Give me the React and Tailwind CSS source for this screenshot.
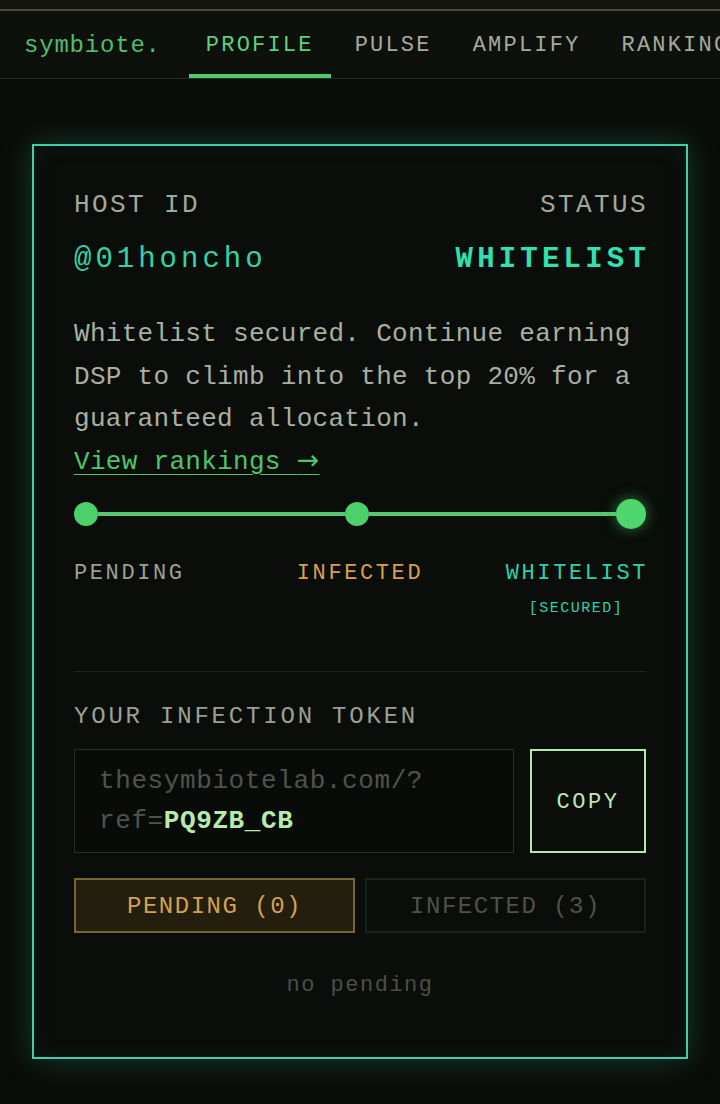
import React from 'react';

const tabs = ['PROFILE', 'PULSE', 'AMPLIFY', 'RANKINGS'];

export default function App() {
  return (
    <div className="min-h-screen bg-[#0a0c09] font-['Liberation_Mono','DejaVu_Sans_Mono',monospace]">
      {/* barra superior */}
      <div className="h-[9px] bg-[#15140f]" />
      <div className="h-[2px] bg-[#4b4a3f]" />

      <nav className="flex h-[68px] items-stretch overflow-hidden whitespace-nowrap border-b border-[#1f2a21] bg-[#0e100c] pl-6">
        <div className="flex items-center border-b-4 border-transparent pr-[28px] pt-[6px] text-[24px] tracking-[0.8px] text-[#4fbf6a]">
          symbiote.
        </div>
        <div className="flex gap-[7px]">
          {tabs.map((t, i) => (
            <div
              key={t}
              className={`flex items-center border-b-4 px-[17px] pt-[6px] text-[22px] tracking-[2.2px] ${
                i === 0 ? 'border-[#52c872] text-[#5fcf7c]' : 'border-transparent text-[#a4ab9d]'
              }`}
            >
              {t}
            </div>
          ))}
        </div>
      </nav>

      <main className="px-8 pb-[45px] pt-[65px]">
        <div className="border-2 border-[#3fcfa8] bg-[#0a0d0a] p-10 shadow-[0_0_30px_rgba(63,207,168,0.25),inset_0_0_24px_rgba(63,207,168,0.06)]">
          {/* Cabecera */}
          <div className="flex justify-between">
            <div>
              <div className="text-[26px] leading-[38px] tracking-[2.4px] text-[#a2a89b]">HOST ID</div>
              <div className="mt-[18px] text-[29px] leading-[36px] tracking-[4px] text-[#33d3a6]">@01honcho</div>
            </div>
            <div className="text-right">
              <div className="mr-[-2px] text-[26px] leading-[38px] tracking-[2.4px] text-[#a2a89b]">STATUS</div>
              <div className="mr-[-4px] mt-[18px] text-[29px] font-bold leading-[36px] tracking-[4.2px] text-[#2fe0b0]">
                WHITELIST
              </div>
            </div>
          </div>

          {/* Texto */}
          <p className="mt-[35px] text-[26px] leading-[42.5px] tracking-[0.3px] text-[#a9b0a2]">
            Whitelist secured. Continue earning DSP to climb into the top 20% for a guaranteed allocation.
          </p>
          <a className="block h-[42.5px] text-[26px] leading-[42.5px] tracking-[0.3px] text-[#4fc46b] underline decoration-1 underline-offset-[5px]">
            View rankings <span className="font-['DejaVu_Sans',sans-serif] text-[27px] leading-[0]">→</span>
          </a>

          {/* Progreso */}
          <div className="mt-4 flex items-center">
            <div className="h-6 w-6 rounded-full bg-[#4cd06a]" />
            <div className="h-1 flex-1 bg-[#55c870]" />
            <div className="h-6 w-6 rounded-full bg-[#4cd06a]" />
            <div className="h-1 flex-1 bg-[#55c870]" />
            <div className="h-[30px] w-[30px] rounded-full bg-[#4fd66e] shadow-[0_0_14px_rgba(79,214,110,0.55)]" />
          </div>

          <div className="mt-[30px] grid grid-cols-3 text-[22px] leading-[30px] tracking-[2.6px]">
            <div className="text-[#9aa194]">PENDING</div>
            <div className="text-center text-[#d7a04d]">INFECTED</div>
            <div className="flex flex-col items-center justify-self-end text-[#2fd1a8]">
              <div className="mr-[-2px]">WHITELIST</div>
              <div className="mt-[10px] text-[15px] leading-[20px] tracking-[1.5px]">[SECURED]</div>
            </div>
          </div>

          <div className="mt-[52px] h-px bg-[#1b211b]" />

          {/* Token */}
          <div className="mt-[30px] text-[24px] leading-[30px] tracking-[2.8px] text-[#9aa194]">
            YOUR INFECTION TOKEN
          </div>
          <div className="mt-[17px] flex gap-4">
            <div className="flex-1 border border-[#262e26] bg-[#090b08] py-[11px] pl-6 pr-4 text-[26px] leading-[40px] tracking-[0.6px] text-[#4e554c]">
              thesymbiotelab.com/?
              <br />
              ref=<span className="font-bold text-[#b8eaa8]">PQ9ZB_CB</span>
            </div>
            <button className="flex w-[116px] items-center justify-center border-2 border-[#b6e8ad] pt-[3px] text-[22px] tracking-[2.5px] text-[#c0e8b4]">
              COPY
            </button>
          </div>

          <div className="mt-[25px] grid h-[55px] grid-cols-2 gap-[10px] text-[24px] tracking-[1.5px]">
            <button className="border-2 border-[#7a6534] bg-[#241e0e] pt-[3px] text-[#d4a24f]">PENDING (0)</button>
            <button className="border-2 border-[#1b211b] pt-[3px] text-[#4d534b]">INFECTED (3)</button>
          </div>

          <div className="mb-4 mt-[38px] text-center text-[22px] leading-[30px] tracking-[1.5px] text-[#4a5047]">
            no pending
          </div>
        </div>
      </main>
    </div>
  );
}
